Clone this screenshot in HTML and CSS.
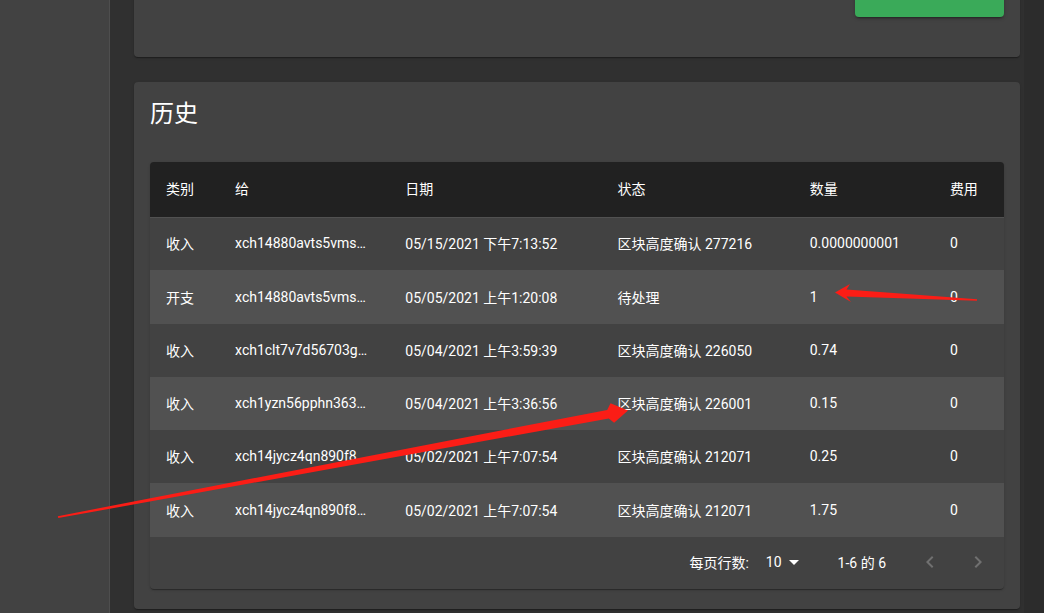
FILE: index.html
```html
<!DOCTYPE html>
<html lang="zh">
<head>
<meta charset="utf-8">
<title>历史</title>
<link rel="stylesheet" href="styles.css">
</head>
<body>
<div class="app">
  <aside class="sidebar"></aside>
  <main class="main">
    <section class="card card-top">
      <button class="btn-green" type="button"></button>
    </section>
    <section class="card card-history">
      <h2 class="title">历史</h2>
      <div class="paper">
        <table class="tx">
          <colgroup>
            <col class="c1"><col class="c2"><col class="c3"><col class="c4"><col class="c5"><col class="c6">
          </colgroup>
          <thead>
            <tr>
              <th>类别</th>
              <th>给</th>
              <th>日期</th>
              <th>状态</th>
              <th>数量</th>
              <th>费用</th>
            </tr>
          </thead>
          <tbody>
            <tr>
              <td>收入</td>
              <td class="addr">xch14880avts5vms…</td>
              <td>05/15/2021 下午7:13:52</td>
              <td>区块高度确认 277216</td>
              <td>0.0000000001</td>
              <td>0</td>
            </tr>
            <tr class="r54">
              <td>开支</td>
              <td class="addr">xch14880avts5vms…</td>
              <td>05/05/2021 上午1:20:08</td>
              <td>待处理</td>
              <td>1</td>
              <td>0</td>
            </tr>
            <tr>
              <td>收入</td>
              <td class="addr">xch1clt7v7d56703g…</td>
              <td>05/04/2021 上午3:59:39</td>
              <td>区块高度确认 226050</td>
              <td>0.74</td>
              <td>0</td>
            </tr>
            <tr>
              <td>收入</td>
              <td class="addr">xch1yzn56pphn363…</td>
              <td>05/04/2021 上午3:36:56</td>
              <td>区块高度确认 226001</td>
              <td>0.15</td>
              <td>0</td>
            </tr>
            <tr>
              <td>收入</td>
              <td class="addr">xch14jycz4qn890f8…</td>
              <td>05/02/2021 上午7:07:54</td>
              <td>区块高度确认 212071</td>
              <td>0.25</td>
              <td>0</td>
            </tr>
            <tr class="r54">
              <td>收入</td>
              <td class="addr">xch14jycz4qn890f8…</td>
              <td>05/02/2021 上午7:07:54</td>
              <td>区块高度确认 212071</td>
              <td>1.75</td>
              <td>0</td>
            </tr>
          </tbody>
        </table>
        <div class="pager">
          <span class="pager-label">每页行数:</span>
          <span class="pager-select">
            <span>10</span>
            <svg class="caret" viewBox="0 0 24 24" width="24" height="24"><path d="M7 10l5 5 5-5z" fill="#fff"/></svg>
          </span>
          <span class="pager-range">1-6 的 6</span>
          <span class="pager-btn">
            <svg viewBox="0 0 24 24" width="24" height="24"><path d="M15.41 7.41L14 6l-6 6 6 6 1.41-1.41L10.83 12z" fill="currentColor"/></svg>
          </span>
          <span class="pager-btn">
            <svg viewBox="0 0 24 24" width="24" height="24"><path d="M10 6L8.59 7.41 13.17 12l-4.58 4.59L10 18l6-6z" fill="currentColor"/></svg>
          </span>
        </div>
      </div>
    </section>
  </main>
  <div class="scrolltrack"></div>
</div>
<svg class="annot" width="1044" height="613" viewBox="0 0 1044 613">
  <polygon fill="#fb1d16" points="977,299.2 846.5,289.6 850,284 835,292.6 851,302 846.5,296.4 977,300.8"/>
  <polygon fill="#fb1d16" points="57.8,516.2 607.2,409.9 610.5,403.2 628,410.5 614.1,422.8 608.8,418.4 58.3,518.1"/>
</svg>
</body>
</html>
```

FILE: styles.css
```css
* { box-sizing: border-box; }

html, body {
  margin: 0;
  padding: 0;
  width: 1044px;
  height: 613px;
  overflow: hidden;
  background: #303030;
  font-family: Roboto, "Noto Sans CJK SC", "Helvetica Neue", Arial, sans-serif;
  color: #fff;
}

.app {
  display: flex;
  height: 613px;
  position: relative;
}

.sidebar {
  width: 110px;
  flex: 0 0 110px;
  background: #424242;
  border-right: 1px solid #4e4e4e;
}

.main {
  flex: 1;
  padding: 0 4px 0 24px;
  display: flex;
  flex-direction: column;
  min-width: 0;
}

.scrolltrack {
  width: 20px;
  flex: 0 0 20px;
  background: #2c2c2c;
}

.card {
  background: #424242;
  border-radius: 4px;
  box-shadow: 0 2px 1px -1px rgba(0,0,0,0.2), 0 1px 1px 0 rgba(0,0,0,0.14), 0 1px 3px 0 rgba(0,0,0,0.12);
}

.card-top {
  margin-top: -35px;
  padding: 16px 16px 40px;
  display: flex;
  justify-content: flex-end;
}

.btn-green {
  width: 149px;
  height: 36px;
  border: 0;
  border-radius: 4px;
  background: #3aaa59;
  box-shadow: 0 3px 1px -2px rgba(0,0,0,0.2), 0 2px 2px 0 rgba(0,0,0,0.14), 0 1px 5px 0 rgba(0,0,0,0.12);
}

.card-history {
  margin-top: 25px;
  padding: 16px 16px 20px;
}

.title {
  margin: 0 0 32px;
  font-size: 24px;
  line-height: 32px;
  font-weight: 400;
}

.paper {
  background: #424242;
  border-radius: 4px;
  overflow: hidden;
  box-shadow: 0 2px 1px -1px rgba(0,0,0,0.2), 0 1px 1px 0 rgba(0,0,0,0.14), 0 1px 3px 0 rgba(0,0,0,0.12);
}

.tx {
  width: 100%;
  border-collapse: collapse;
  table-layout: fixed;
  font-size: 14px;
}

.c1 { width: 69px; }
.c2 { width: 170px; }
.c3 { width: 212px; }
.c4 { width: 192px; }
.c5 { width: 140px; }
.c6 { width: 70px; }

.tx th {
  background: #212121;
  height: 55px;
  padding: 0 16px 2px;
  text-align: left;
  font-weight: 400;
  border-bottom: 1px solid #515151;
}

.tx td {
  height: 53px;
  padding: 0 16px 1px;
  white-space: nowrap;
}

.tx tbody tr.r54 td { height: 54px; }

.tx tbody tr:nth-child(odd) { background: #424242; }
.tx tbody tr:nth-child(even) { background: #515151; }

.pager {
  height: 52px;
  display: flex;
  align-items: center;
  justify-content: flex-end;
  padding-right: 14px;
  padding-bottom: 2px;
  font-size: 14px;
}

.pager-label { margin-right: 17px; }

.pager-select {
  display: flex;
  align-items: center;
  margin-right: 32px;
}

.caret { display: block; }

.pager-range { margin-right: 32px; }

.pager-btn {
  width: 24px;
  height: 24px;
  color: #707070;
  display: flex;
}

.pager-btn + .pager-btn { margin-left: 24px; }

.annot {
  position: absolute;
  left: 0;
  top: 0;
  pointer-events: none;
}
```
